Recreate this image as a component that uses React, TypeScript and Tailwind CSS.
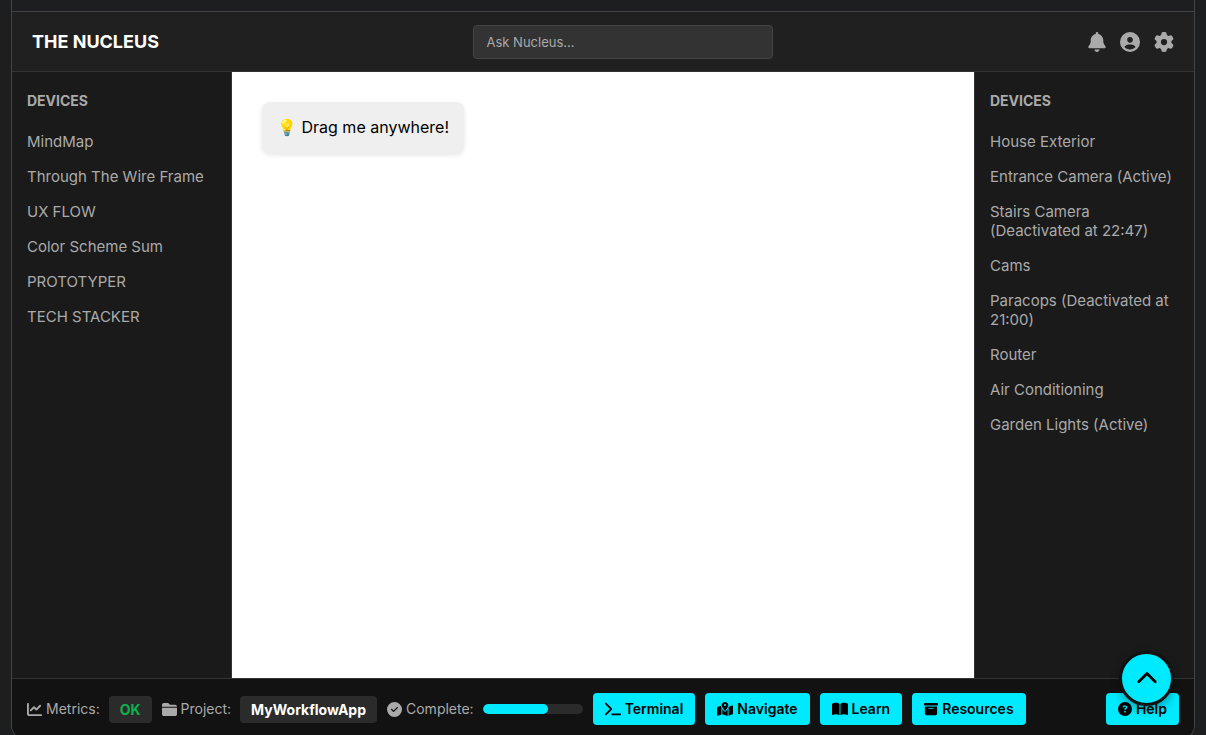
import type { ReactNode } from 'react';
import {
  FaBell,
  FaBookOpen,
  FaBoxArchive,
  FaChartLine,
  FaChevronUp,
  FaCircleCheck,
  FaCircleQuestion,
  FaCircleUser,
  FaFolderClosed,
  FaGear,
  FaMapLocationDot,
  FaTerminal,
} from 'react-icons/fa6';

const tools = ['MindMap', 'Through The Wire Frame', 'UX FLOW', 'Color Scheme Sum', 'PROTOTYPER', 'TECH STACKER'];

const devices = [
  'House Exterior',
  'Entrance Camera (Active)',
  'Stairs Camera (Deactivated at 22:47)',
  'Cams',
  'Paracops (Deactivated at 21:00)',
  'Router',
  'Air Conditioning',
  'Garden Lights (Active)',
];

function Sidebar({ items, className }: { items: string[]; className: string }) {
  return (
    <aside className={`w-[220px] shrink-0 border-[#333333] bg-[#1a1a1a] px-[15px] pt-5 text-[#aaaaaa] ${className}`}>
      <h2 className="text-sm leading-[18px] font-bold">DEVICES</h2>
      <ul className="mt-[22px] flex flex-col gap-4 text-[15px] leading-[19px]">
        {items.map((item) => (
          <li key={item}>
            <a href="#" className="block">{item}</a>
          </li>
        ))}
      </ul>
    </aside>
  );
}

function ActionButton({ icon, children }: { icon: ReactNode; children: ReactNode }) {
  return (
    <button type="button" className="flex h-8 items-center gap-1 rounded bg-[#00eaff] px-3 text-sm font-semibold text-black">
      {icon}
      {children}
    </button>
  );
}

function Status({ icon, label, children }: { icon: ReactNode; label: string; children: ReactNode }) {
  return (
    <div className="flex items-center gap-[9px]">
      <span className="flex items-center gap-1">
        {icon}
        {label}
      </span>
      {children}
    </div>
  );
}

function Badge({ children, className }: { children: ReactNode; className: string }) {
  return <span className={`rounded bg-[#2b2b2b] px-[11px] py-1 leading-[19px] font-bold ${className}`}>{children}</span>;
}

export default function App() {
  return (
    <div className="h-screen overflow-hidden bg-[#1c1e20] px-[11px] font-[Inter,sans-serif]">
      <div className="flex h-[calc(100vh+5px)] flex-col overflow-hidden rounded-b-[15px] border-x border-b border-[#444444]">
        <div className="h-[11px] shrink-0" />
        <header className="flex h-[61px] shrink-0 items-center justify-between border-y border-t-[#444444] border-b-[#333333] bg-[#202020] px-5">
          <h1 className="text-lg font-bold text-white">THE NUCLEUS</h1>
          <input
            type="text"
            aria-label="Ask Nucleus"
            placeholder="Ask Nucleus..."
            className="h-[34px] w-[300px] rounded border border-[#444444] bg-[#333333] px-3 text-[13px] text-white outline-none placeholder:text-[#aaaaaa]"
          />
          <nav className="flex items-center gap-[14px] text-[20px] text-[#aaaaaa]">
            <button type="button" aria-label="Notifications"><FaBell className="w-[18px]" /></button>
            <button type="button" aria-label="Account"><FaCircleUser /></button>
            <button type="button" aria-label="Settings"><FaGear /></button>
          </nav>
        </header>

        <div className="flex min-h-0 flex-1">
          <Sidebar items={tools} className="border-r" />
          <main className="flex min-w-0 flex-1 items-start bg-white p-[30px]">
            <div className="cursor-move rounded-lg bg-[#efefef] px-[15px] py-4 text-base leading-[19px] text-black shadow-[0_2px_5px_rgba(0,0,0,0.1)]">
              💡 Drag me anywhere!
            </div>
          </main>
          <Sidebar items={devices} className="border-l" />
        </div>

        <footer className="flex h-[61px] shrink-0 items-center gap-2.5 border-t border-[#333333] bg-[#121212] px-[15px] text-sm text-[#aaaaaa]">
          <Status icon={<FaChartLine className="size-[15px]" />} label="Metrics:">
            <Badge className="text-[#0db14b]">OK</Badge>
          </Status>
          <Status icon={<FaFolderClosed className="size-[15px]" />} label="Project:">
            <Badge className="text-white">MyWorkflowApp</Badge>
          </Status>
          <Status icon={<FaCircleCheck className="size-[15px]" />} label="Complete:">
            <div role="progressbar" aria-label="Complete" aria-valuenow={65} className="h-2.5 w-[100px] overflow-hidden rounded-[5px] bg-[#2b2b2b]">
              <div className="h-full w-[65%] rounded-[5px] bg-[#00eaff]" />
            </div>
          </Status>
          <ActionButton icon={<FaTerminal className="size-4" />}>Terminal</ActionButton>
          <ActionButton icon={<FaMapLocationDot className="size-4" />}>Navigate</ActionButton>
          <ActionButton icon={<FaBookOpen className="size-4" />}>Learn</ActionButton>
          <ActionButton icon={<FaBoxArchive className="size-3.5" />}>Resources</ActionButton>
          <div className="ml-auto">
            <ActionButton icon={<FaCircleQuestion className="size-3.5" />}>Help</ActionButton>
          </div>
        </footer>
      </div>

      <button
        type="button"
        aria-label="Back to top"
        className="fixed right-8 bottom-[29px] flex size-[55px] items-center justify-center rounded-full border-3 border-[#121212] bg-[#00eaff] text-[22px] text-black shadow-[0_4px_10px_rgba(0,0,0,0.3)]"
      >
        <FaChevronUp />
      </button>
    </div>
  );
}
